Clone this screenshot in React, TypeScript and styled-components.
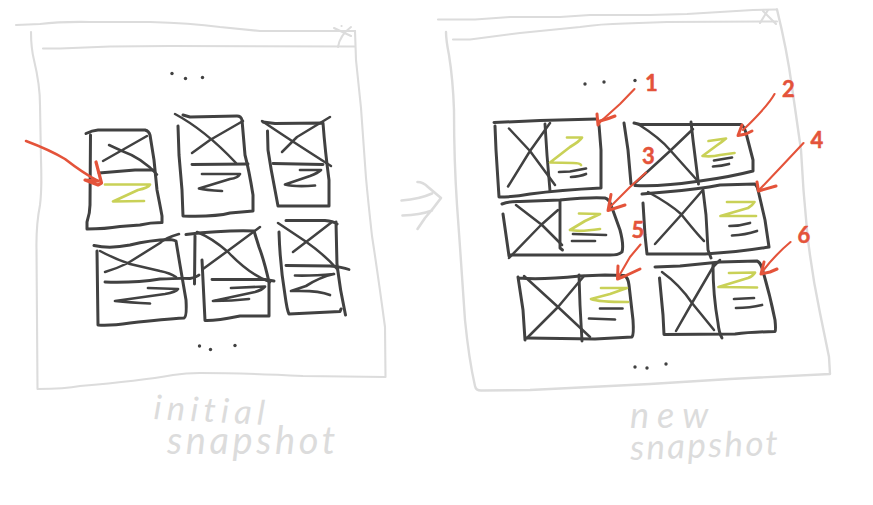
import React from "react";
import styled, { createGlobalStyle } from "styled-components";

const INK = "#414141";
const PENCIL = "#dcdcdc";
const RED = "#e4533a";
const OLIVE = "#c9d157";

const GlobalStyle = createGlobalStyle`
  body {
    margin: 0;
    background: #fff;
    overflow: hidden;
  }
`;

const Board = styled.main`
  display: grid;
  grid-template-columns: 395px 50px 428px;
  width: 873px;
  height: 505px;
  background: #fff;
`;

const Snapshot = styled.figure`
  margin: 0;
  display: flex;
  flex-direction: column;
`;

const Drawing = styled.svg`
  display: block;
  flex: none;
  overflow: visible;
  fill: none;
  stroke-linecap: round;
  stroke-linejoin: round;
`;

const Transition = styled.div`
  padding-top: 175px;
`;

const Frame = styled.path<{ $weight?: number }>`
  stroke: ${PENCIL};
  stroke-width: ${(p) => p.$weight ?? 2.1};
`;

const Stroke = styled.path<{ $weight?: number }>`
  stroke: ${INK};
  stroke-width: ${(p) => p.$weight ?? 2.7};
`;

const Highlight = styled.path`
  stroke: ${OLIVE};
  stroke-width: 2.7;
`;

const Pointer = styled.path<{ $weight?: number }>`
  stroke: ${RED};
  stroke-width: ${(p) => p.$weight ?? 2.1};
`;

const Dot = styled.circle`
  fill: ${INK};
`;

const StepNumber = styled.text`
  fill: ${RED};
  stroke: ${RED};
  stroke-width: 0.5;
  font-family: Lato, "Liberation Sans", sans-serif;
  font-size: 22px;
  font-weight: 700;
  text-anchor: middle;
`;

const Caption = styled.figcaption<{ $indent: number }>`
  display: flex;
  flex-direction: column;
  align-items: flex-start;
  padding-left: ${(p) => p.$indent}px;
  color: ${PENCIL};
  font-family: Lato, "Liberation Sans", sans-serif;
  font-style: italic;
  font-weight: 400;
`;

const Word = styled.span<{ $size: number; $spacing: number; $line: number; $shift?: number; $tilt?: number }>`
  font-size: ${(p) => p.$size}px;
  line-height: ${(p) => p.$line}px;
  letter-spacing: ${(p) => p.$spacing}px;
  margin-left: ${(p) => p.$shift ?? 0}px;
  transform: rotate(${(p) => p.$tilt ?? 0}deg);
  transform-origin: left center;
  white-space: nowrap;
`;

type CardShape = {
  outline: string;
  divider: string;
  cross: string;
  text?: string;
  highlight?: string;
};

const initialCards: CardShape[] = [
  {
    outline:
      "M86 133.500Q92 130.500 98 130L145 130Q149 131 150 135L154 160L157 190Q160 205 162 216L162 222.500Q150 222.500 140 225L120 226.500Q105 229 87 229L87 222Q90 213 90 205L90.500 135",
    divider: "M99 173L135 170L153 170",
    cross: "M109 145L122 151Q142 158 157 174.500M103 161L147 136",
    highlight: "M105 184.500L150 184.500Q148 188 138 190L113 201.500L144 201",
  },
  {
    outline:
      "M178 126L179 155L182 190L183 216Q215 217 230 213L253 211L253 195Q249 170 245 155L242 120Q241 116 237 116L190 117L183 115",
    divider: "M192 164.500L248 164",
    cross: "M175 114Q205 130 236 163M192 153L210 140L243 121",
    text: "M202 174L240 174Q238 178 230 179L199 188.500Q205 190 222 191",
  },
  {
    outline:
      "M267.500 131L268 150Q271 170 275 190L278 206L329 206L329 180Q325 150 323 123L275 123.500L263 122",
    divider: "M273 163.500L323 164.500",
    cross: "M262 121Q290 140 331 166M330 117L297 137L282 152",
    text: "M300 170L321 170Q318 173 310 176L285 184.500Q295 187 315 185.500",
  },
  {
    outline:
      "M97 251L98 325Q110 326 130 323Q165 319 184 318Q187 317 186 300L180 265L176 241Q174 240 170 239.500Q150 240 130 245Q110 249 94 245.500",
    divider: "M105 282Q135 283 160 279Q180 278 190 278.500Q197 277 199 275",
    cross: "M100 251Q115 259 130 264L160 271Q170 273 176 277M105 272Q118 268 128 263L160 243Q165 238 179 234",
    text: "M148 288L178 289Q176 292 165 294L115 301Q130 302.500 150 303.500",
  },
  {
    outline:
      "M195 236L194.500 284M202 260L205 320.500Q215 321 240 316L269 316L269 282Q264 260 259 247L254 231Q225 230 186 234.500",
    divider: "M212 279.500L265 279.500L274 281",
    cross: "M197 232Q212 238 228 252Q250 275 270 282M260 227L229 250L203 269",
    text: "M231 288L265 286.500Q262 290 255 292L213 301Q232 301 249 299",
  },
  {
    outline:
      "M279 232Q280 265 285 295Q287 310 289 314L340 311.500L341 309M345.500 315Q340 290 337 265L336 222M286 220.500L325 220.500Q333 221 337 224",
    divider: "M286 265.500L330 266Q342 267 349 269.500",
    cross: "M278 223L305 241Q325 255 337 269M332 222L310 239L293 252",
    text: "M295 275.500Q312 276 334 274Q320 277 306 286L291 291Q318 290 330 295",
  },
];

const newCards: CardShape[] = [
  {
    outline:
      "M494 122.500L540 120.500L597 119M495 126L496 150L499 197Q515 197 530 194Q560 190 601 188L601 150L599 125",
    divider: "M545 124L547 155L550 191",
    cross: "M509 128.500L530 151L555 185M550 123L545 130L530 151L508 186.500",
    text: "M559 172L570 171.500L586 168.500M571 177Q580 176.500 586 174",
    highlight: "M567 137.500L582 137.500Q580 141 570 147L550 162.500L573 163Q580 163 581 165",
  },
  {
    outline:
      "M624 123L628 150L631 184M634 123L640 124.500L741 124.500Q744 126 746 133L753 160L753 171Q730 177 700 181Q660 187 635 185.500",
    divider: "M691 122L693 140L698.500 184",
    cross: "M638 124Q660 138 670 150L696 179M693 129L670 151L634 184",
    text: "M714 160.500L732 157.500M713 166.500Q722 166 729 164",
    highlight: "M708.500 141L726 138.500Q722 142 716 146L702.500 156Q712 157 720 155L734.500 153",
  },
  {
    outline:
      "M502 204Q510 201 520 201.500L560 200Q590 197 605 198Q609 199 611 205L620 230Q624 245 622 252Q619 255 610 255L510 255M503 214L509 256",
    divider: "M560 201L560 248L562.500 250",
    cross: "M516 205L542 225L562 245M558 210L541 225L509 258",
    text: "M573 234L606 235M572 241L595 241",
    highlight: "M579 213.500L600 214L585 221L570 230Q580 232 600 229",
  },
  {
    outline:
      "M642 194L665 192Q700 189 720 185L755 184Q758 187 758.500 192L765 220L769 247Q740 252 705 254L647 254L645 235L643 203",
    divider: "M703 190L706 215L708 250L711 258",
    cross: "M648 192Q670 204 681 214Q697 234 704 241M702 191L682 214L655 244",
    text: "M729.500 226Q740 226 750 223M732 235.500Q745 235 757 231",
    highlight: "M727 202L754.500 202Q753 205 748 208L720.500 216L756 216",
  },
  {
    outline:
      "M518 277L523 310L525 340M519 278Q540 280 580 276L605 275L624 275.500Q628 277 629 285L633 320Q634 335 632 337L595 339L527 338",
    divider: "M579 275L580 305L582 341",
    cross: "M524 276L558 307L590 337M584 276L558 307L527 338",
    text: "M600 308.500L622.500 308.500M589 318.500L615 319.500",
    highlight: "M601 288L627 288L610 294L591 299Q598 302 628 302",
  },
  {
    outline:
      "M655 267L680 266L720 262L757 261Q760 262 762 268Q770 295 775 320Q776 330 775 331.500Q750 332 735 334L664 334.500L663 315L659.500 278",
    divider: "M713 265Q713 295 718 323Q719 333 722 338",
    cross: "M662 272Q680 285 692 303L714 330M720 260L713 267L692 303L676 331",
    text: "M734 299L754 298M736 308Q750 308 762 305",
    highlight: "M729 273L755 272.500Q753 276 748 278L718.500 287L757 287.500",
  },
];

type Step = { label: string; x: number; y: number; shaft: string; head: string };

const steps: Step[] = [
  { label: "1", x: 651.5, y: 91, shaft: "M634.500 89L620 104L600 122", head: "M597 114L598 125L600 121Q608 119 615 116" },
  { label: "2", x: 788.5, y: 97, shaft: "M774.500 94Q768 106 743 130", head: "M742 125L738 135.500L746 134L752 131" },
  { label: "3", x: 648.5, y: 164, shaft: "M646 172.500L630 187L608 209", head: "M611 194.500L608 210.500L625 205" },
  { label: "4", x: 817, y: 148, shaft: "M803.500 143L780 168L760 189", head: "M757 182L758.500 191L776 186" },
  { label: "5", x: 638, y: 238, shaft: "M640.500 244.500L630 257L619 276", head: "M618 266L617.500 279L625 276L640 269" },
  { label: "6", x: 804, y: 243, shaft: "M790.500 242Q775 255 762 272", head: "M764 262L761 274L770 272L777 269" },
];

function Card({ outline, divider, cross, text, highlight }: CardShape) {
  return (
    <g>
      <Stroke d={outline} $weight={3} />
      <Stroke d={divider} $weight={2.9} />
      <Stroke d={cross} $weight={2.5} />
      {text && <Stroke d={text} $weight={2.7} />}
      {highlight && <Highlight d={highlight} />}
    </g>
  );
}

function Dots({ points }: { points: [number, number][] }) {
  return (
    <g>
      {points.map(([x, y]) => (
        <Dot key={x} cx={x} cy={y} r={1.7} />
      ))}
    </g>
  );
}

export default function App() {
  return (
    <>
      <GlobalStyle />
      <Board>
        <Snapshot>
          <Drawing width="395" height="392" viewBox="0 0 395 392">
            <Frame d="M16 25L40 24Q60 21.500 90 22L150 22Q190 23 220 27L260 31L355 31" />
            <Frame d="M43 48.500L60 48.500L110 46.500L170 46L355 46.500" />
            <Frame d="M31 32Q31 48 34 60Q40 85 40 105L41 160Q42 190 40 205Q36 225 36.500 250L37.500 389Q65 389 80 386Q140 381 173 375Q186 373 200 373Q240 373 303 376L385.500 377L385 327Q378 275 372 236Q368 200 366 178L361 108L356 60L355 31" />
            <Frame d="M334 28L351 36M351 27Q340 35 338 47M341.500 26L341.600 26" />
            <Dots points={[[172, 73.5], [185.5, 78.5], [202.5, 77.5]]} />
            {initialCards.map((card) => (
              <Card key={card.outline} {...card} />
            ))}
            <Dots points={[[199.5, 346], [210.5, 349.5], [235, 345.5]]} />
            <Pointer $weight={2.6} d="M26 141Q50 150 65 159Q83 173 98 181" />
            <Pointer $weight={3.2} d="M96 162L101.500 183L98 185L85 180L98 181" />
          </Drawing>
          <Caption $indent={154}>
            <Word $size={34} $spacing={5.4} $line={28} $tilt={3}>initial</Word>
            <Word $size={38} $spacing={3.6} $line={38} $shift={13}>snapshot</Word>
          </Caption>
        </Snapshot>

        <Transition>
          <Drawing width="50" height="65" viewBox="395 175 50 65">
            <Frame
              $weight={2.6}
              d="M401.500 200.500Q420 199 432 193.500M402.500 215.500Q420 215 432 210.500M417.500 182Q423 182 428 187L441 198Q433 209 425 218L417.500 229"
            />
          </Drawing>
        </Transition>

        <Snapshot>
          <Drawing width="428" height="392" viewBox="445 0 428 392">
            <Frame d="M438 19.500L475 19.500L510 17L560 17L590 15L650 15L687 14L753 10L777 9.500" />
            <Frame d="M453 39.500L470 39.500L520 33L580 27Q600 24 625 23.500L667 22L777 21.500" />
            <Frame
              $weight={2.4}
              d="M446 32Q446 40 449 55Q453 80 454 110Q454 160 457 205L460 247L465 320Q469 360 475 386Q476 391 482 390.500L530 390L650 384L730 379L830 374L829 357L820 313Q811 270 807 230Q803 190 801 150L792 87Q787 50 777 9.500"
            />
            <Frame d="M760 23L768 10M763 11L776 24" />
            <Dots points={[[585, 84], [604, 82], [635, 80.5]]} />
            {newCards.map((card) => (
              <Card key={card.outline} {...card} />
            ))}
            <Dots points={[[635, 367], [647, 368], [666, 364]]} />
            {steps.map(({ label, x, y, shaft, head }) => (
              <g key={label}>
                <Pointer d={shaft} />
                <Pointer d={head} $weight={3} />
                <StepNumber x={x} y={y}>{label}</StepNumber>
              </g>
            ))}
          </Drawing>
          <Caption $indent={185}>
            <Word $size={36} $spacing={8} $line={44}>new</Word>
            <Word $size={35} $spacing={2.3} $line={20} $tilt={-2}>snapshot</Word>
          </Caption>
        </Snapshot>
      </Board>
    </>
  );
}
